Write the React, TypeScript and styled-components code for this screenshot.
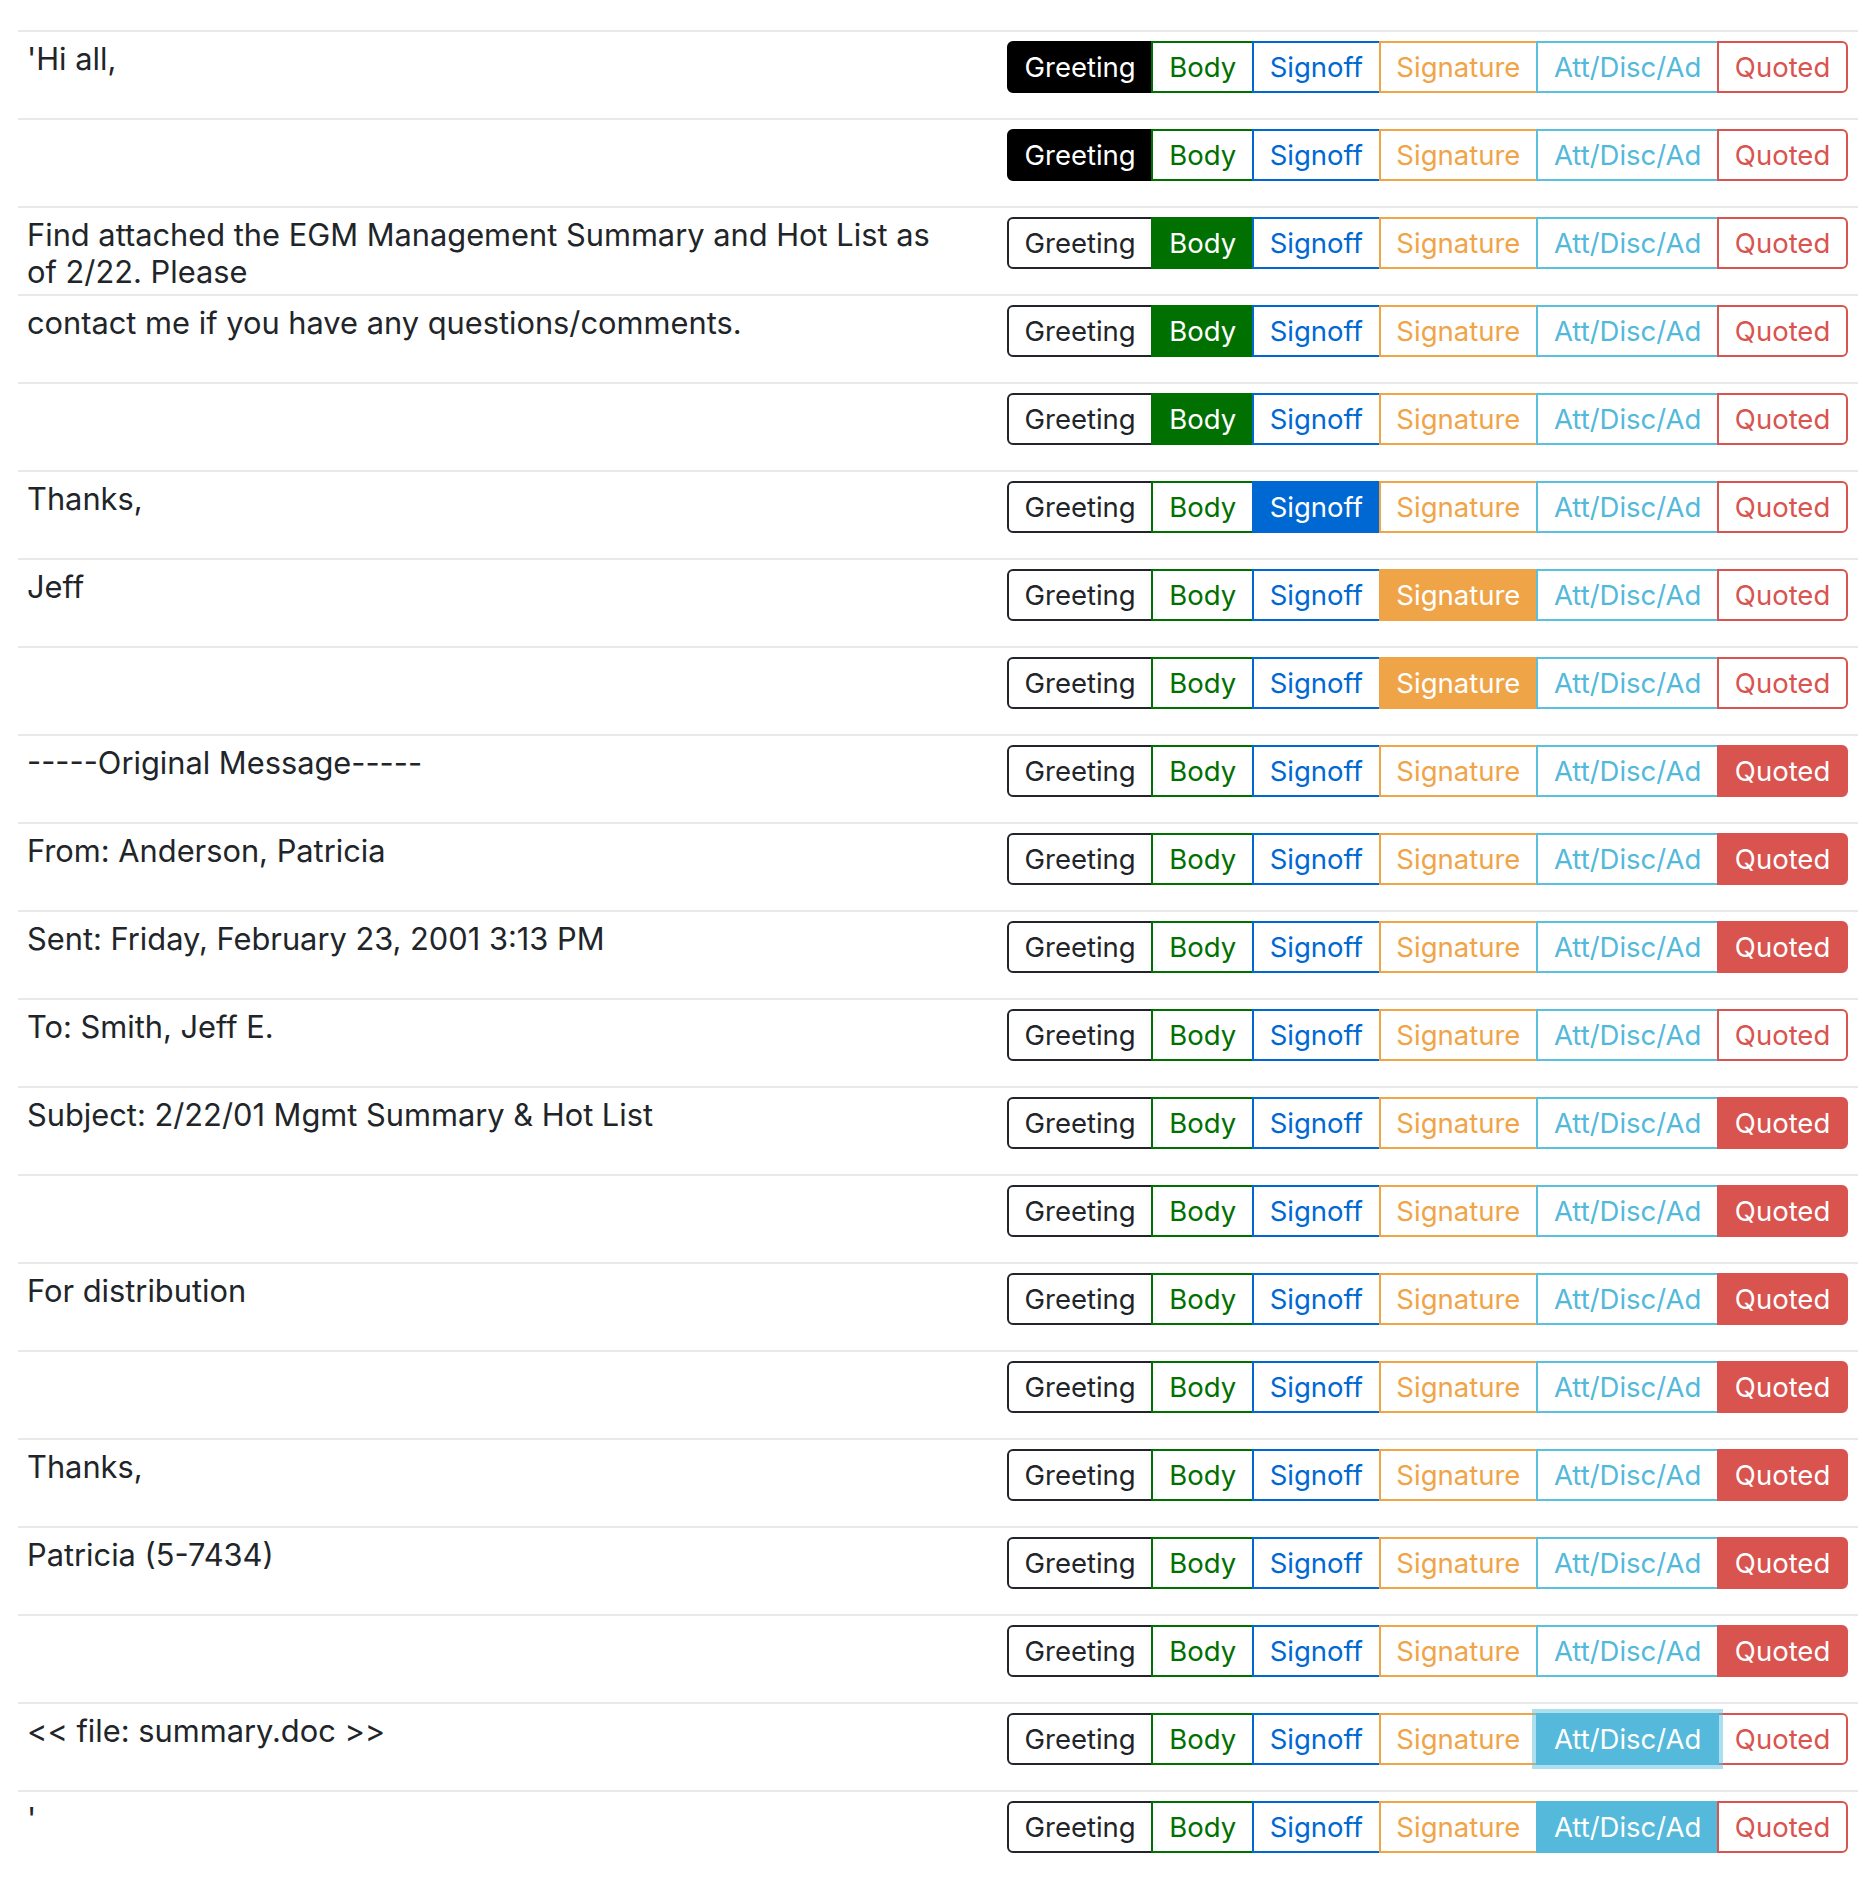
import { useState } from "react";
import styled, { createGlobalStyle, css } from "styled-components";

type Part = "greeting" | "body" | "signoff" | "signature" | "att" | "quoted";

const PARTS: { key: Part; label: string; ink: string; line: string; fill: string }[] = [
  { key: "greeting", label: "Greeting", ink: "#212529", line: "#212529", fill: "#000000" },
  { key: "body", label: "Body", ink: "#007000", line: "#007000", fill: "#007000" },
  { key: "signoff", label: "Signoff", ink: "#0068d3", line: "#0068d3", fill: "#0068d3" },
  { key: "signature", label: "Signature", ink: "#f0a448", line: "#f0a448", fill: "#f0a448" },
  { key: "att", label: "Att/Disc/Ad", ink: "#53b9db", line: "#5bc0de", fill: "#54b9da" },
  { key: "quoted", label: "Quoted", ink: "#d9534f", line: "#d9534f", fill: "#d9534f" },
];

const LINES: { text: string; part: Part | null }[] = [
  { text: "'Hi all,", part: "greeting" },
  { text: "", part: "greeting" },
  { text: "Find attached the EGM Management Summary and Hot List as of 2/22. Please", part: "body" },
  { text: "contact me if you have any questions/comments.", part: "body" },
  { text: "", part: "body" },
  { text: "Thanks,", part: "signoff" },
  { text: "Jeff", part: "signature" },
  { text: "", part: "signature" },
  { text: "-----Original Message-----", part: "quoted" },
  { text: "From: Anderson, Patricia", part: "quoted" },
  { text: "Sent: Friday, February 23, 2001 3:13 PM", part: "quoted" },
  { text: "To: Smith, Jeff E.", part: null },
  { text: "Subject: 2/22/01 Mgmt Summary & Hot List", part: "quoted" },
  { text: "", part: "quoted" },
  { text: "For distribution", part: "quoted" },
  { text: "", part: "quoted" },
  { text: "Thanks,", part: "quoted" },
  { text: "Patricia (5-7434)", part: "quoted" },
  { text: "", part: "quoted" },
  { text: "<< file: summary.doc >>", part: "att" },
  { text: "'", part: "att" },
];

const GlobalStyle = createGlobalStyle`
  * { box-sizing: border-box; }
  body {
    margin: 0;
    background: #ffffff;
    color: #212529;
    font-family: Inter, "Noto Sans", "Liberation Sans", sans-serif;
  }
`;

const Page = styled.main`
  padding: 30px 12px 0 18px;
`;

const Table = styled.div`
  display: flex;
  flex-direction: column;
`;

const Row = styled.div`
  display: flex;
  gap: 34px;
  height: 88px;
  border-top: 2px solid #e9e9e9;
`;

const LineText = styled.div`
  flex: 1;
  min-width: 0;
  padding: 9px;
  font-size: 30.8px;
  line-height: 36.7px;
  white-space: pre-wrap;
`;

const Controls = styled.div`
  flex: none;
  padding: 9px 10px 0 9px;
`;

const ButtonGroup = styled.div`
  display: inline-flex;
`;

const PartButton = styled.button<{ $ink: string; $line: string; $fill: string; $on: boolean; $focus: boolean }>`
  position: relative;
  margin: 0 0 0 -2px;
  padding: 7px 15.75px;
  font-family: inherit;
  font-size: 27.5px;
  line-height: 34px;
  color: ${(p) => (p.$on ? "#ffffff" : p.$ink)};
  background: ${(p) => (p.$on ? p.$fill : "#ffffff")};
  border: 2px solid ${(p) => (p.$on ? p.$fill : p.$line)};
  border-radius: 0;
  cursor: pointer;
  white-space: nowrap;

  &:first-child {
    margin-left: 0;
    border-radius: 6px 0 0 6px;
  }

  &:last-child {
    border-radius: 0 6px 6px 0;
  }

  &:hover {
    z-index: 1;
  }

  &:focus {
    outline: none;
  }

  ${(p) =>
    p.$focus &&
    css`
      z-index: 2;
      box-shadow: 0 0 0 4px rgba(91, 192, 222, 0.5);
    `}
`;

const App = () => {
  const [tags, setTags] = useState<(Part | null)[]>(LINES.map((l) => l.part));
  const [focused, setFocused] = useState<number>(19);

  const pick = (row: number, part: Part) => {
    setTags((prev) => prev.map((t, i) => (i === row ? part : t)));
    setFocused(row);
  };

  return (
    <Page>
      <GlobalStyle />
      <Table>
        {LINES.map((line, row) => (
          <Row key={row}>
            <LineText>{line.text}</LineText>
            <Controls>
              <ButtonGroup>
                {PARTS.map((part) => (
                  <PartButton
                    key={part.key}
                    type="button"
                    $ink={part.ink}
                    $line={part.line}
                    $fill={part.fill}
                    $on={tags[row] === part.key}
                    $focus={focused === row && tags[row] === part.key}
                    onClick={() => pick(row, part.key)}
                  >
                    {part.label}
                  </PartButton>
                ))}
              </ButtonGroup>
            </Controls>
          </Row>
        ))}
      </Table>
    </Page>
  );
};

export default App;
